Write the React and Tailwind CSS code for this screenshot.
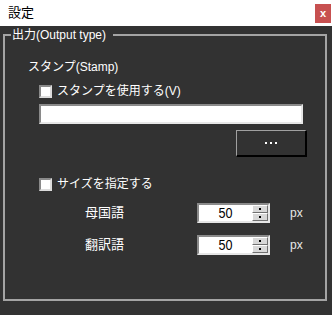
import React from 'react';

const Check = ({ label }) => (
  <div className="flex items-center gap-[5px] ml-[34px] h-[16px]">
    <span className="w-[13px] h-[13px] bg-white border-2 border-t-[#8a8a8a] border-l-[#8a8a8a] border-b-[#dcdcdc] border-r-[#dcdcdc]" />
    <span>{label}</span>
  </div>
);

const Spin = ({ value }) => (
  <div className="w-[73px] h-[20px] bg-white flex border-2 border-t-[#8a8a8a] border-l-[#8a8a8a] border-b-[#e6e6e6] border-r-[#e6e6e6]">
    <div className="flex-1 text-center text-black font-['Liberation_Sans',sans-serif] text-[14px] leading-[16px] scale-x-90">{value}</div>
    <div className="w-[16px] flex flex-col">
      {[0, 1].map((i) => (
        <div key={i} className="h-[8px] bg-[#d8d8d8] border border-t-white border-l-white border-b-[#707070] border-r-[#707070] flex items-center justify-center">
          <span className="w-[2px] h-[2px] bg-black" />
        </div>
      ))}
    </div>
  </div>
);

const SizeRow = ({ label, value, className }) => (
  <div className={`flex items-center h-[20px] ${className}`}>
    <span className="ml-[80px] w-[112px] text-[13px]">{label}</span>
    <Spin value={value} />
    <span className="ml-[20px] text-[#e8e8e8]">px</span>
  </div>
);

export default function App() {
  return (
    <div className="w-[332px] h-[315px] flex flex-col bg-[#323232] font-['Liberation_Sans','Noto_Sans_CJK_JP',sans-serif] text-[12px] leading-[16px] text-white">
      {/* Title bar */}
      <div className="h-[26px] bg-white flex items-center justify-between pl-[8px] pr-[1px]">
        <span className="text-black text-[13px]">設定</span>
        <div className="w-[16px] h-[19px] bg-[#c75050] text-white text-[11px] font-bold flex items-center justify-center">x</div>
      </div>

      {/* Output type group */}
      <fieldset className="mt-[1px] ml-[3px] mr-[5px] h-[274px] border-2 border-[#a4a4a4] p-0">
        <legend className="ml-[6px] pl-[1px] pr-[7px] leading-[16px] text-[12px]">出力(Output type)</legend>
        <div className="flex flex-col">
          <div className="mt-[16px] ml-[23px] h-[16px]">スタンプ(Stamp)</div>
          <div className="mt-[8px]">
            <Check label="スタンプを使用する(V)" />
          </div>
          <div className="mt-[5px] ml-[34px] mr-[22px] h-[20px] bg-white border-2 border-t-[#8a8a8a] border-l-[#8a8a8a] border-b-[#e6e6e6] border-r-[#e6e6e6]" />
          <div className="mt-[6px] self-end mr-[18px] w-[71px] h-[27px] border-t border-l border-t-[#a0a0a0] border-l-[#a0a0a0] border-b-2 border-r-2 border-b-black border-r-black flex items-center justify-center gap-[3px]">
            <span className="w-[2px] h-[2px] bg-white" />
            <span className="w-[2px] h-[2px] bg-white" />
            <span className="w-[2px] h-[2px] bg-white" />
          </div>
          <div className="mt-[19px]">
            <Check label="サイズを指定する" />
          </div>
          <SizeRow label="母国語" value="50" className="mt-[11px]" />
          <SizeRow label="翻訳語" value="50" className="mt-[12px]" />
        </div>
      </fieldset>
    </div>
  );
}
